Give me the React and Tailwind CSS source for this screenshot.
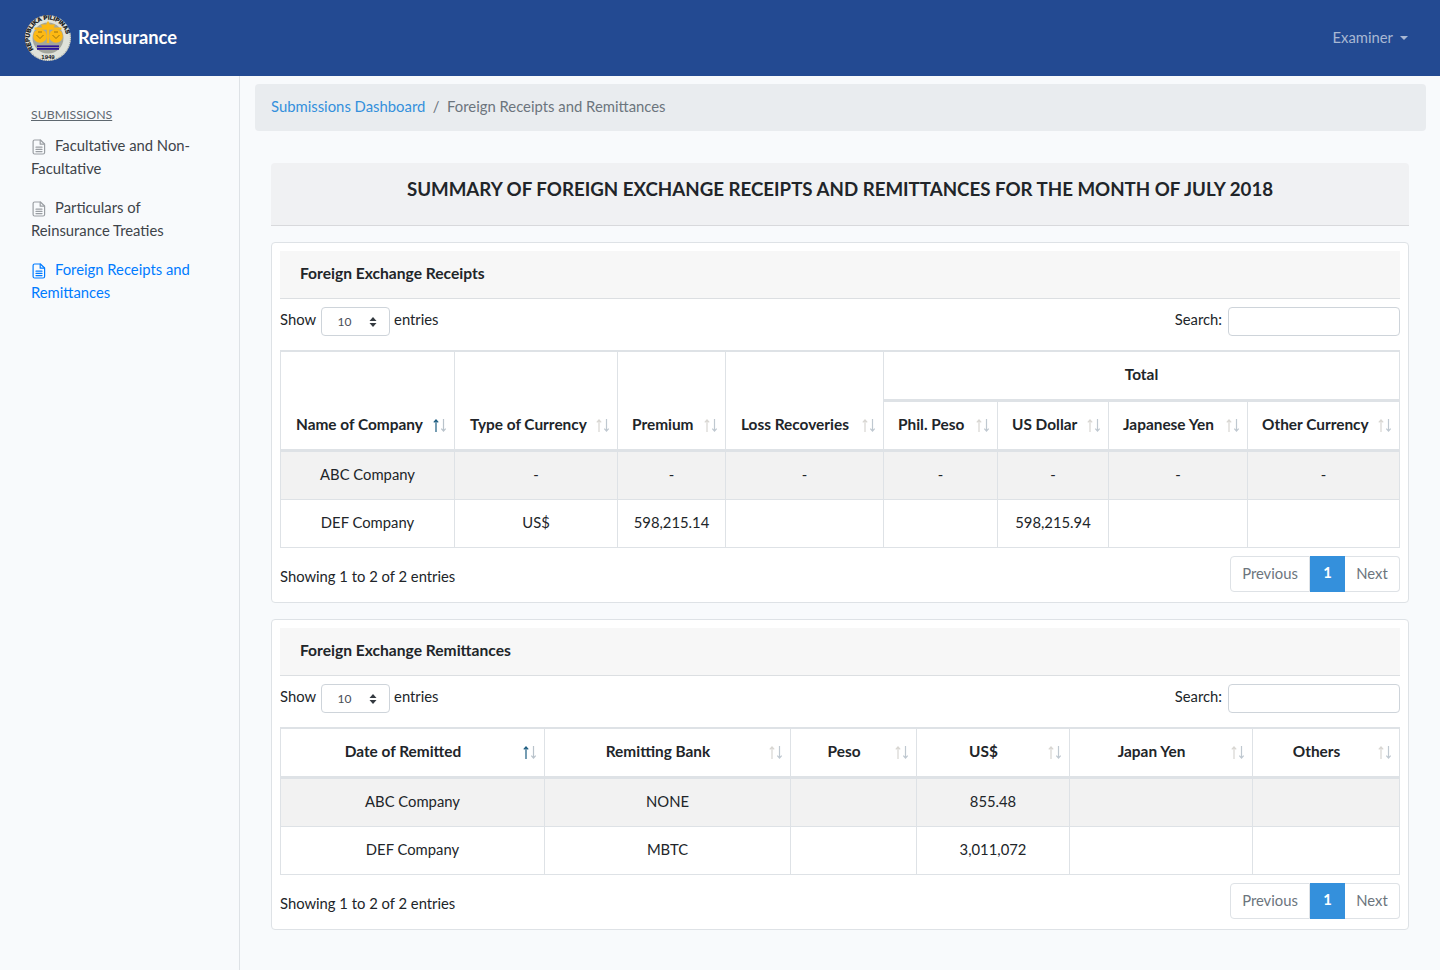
import React from "react";

const FONT = "font-['Lato','Noto_Sans',sans-serif]";

function Seal() {
  return (
    <svg width="48" height="48" viewBox="0 0 48 48" aria-label="Seal">
      <defs>
        <path id="sealRing" d="M9.500 35.300A18.400 18.400 0 1 1 38.500 35.300" />
      </defs>
      <circle cx="24" cy="24" r="23" fill="#dfe2da" />
      <circle cx="24" cy="24" r="22.400" fill="none" stroke="#3a3e42" strokeWidth="0.500" strokeDasharray="1 1" />
      <text fontSize="6" fontWeight="700" fill="#0f1216" stroke="#0f1216" strokeWidth="0.300" fontFamily="Liberation Sans, sans-serif">
        <textPath href="#sealRing" startOffset="0">REPUBLIKA PILIPINAS</textPath>
      </text>
      <text x="24" y="44.500" textAnchor="middle" fontSize="6" fontWeight="700" fill="#0f1216" fontFamily="Liberation Sans, sans-serif">1949</text>
      <circle cx="24" cy="24" r="15.500" fill="#a3a69c" />
      <path d="M17 10.500h14l-1.400 3.400H18.400z" fill="#fdb913" />
      <path d="M24 6.800l1.800 3.400 -1.800 2 -1.800-2z" fill="#fdb913" />
      <rect x="22.800" y="11" width="2.400" height="18" fill="#fdb913" />
      <path d="M10.500 13.500h27v2.200h-27z" fill="#fdb913" />
      <circle cx="16" cy="22" r="6.800" fill="#fdb913" />
      <circle cx="32" cy="22" r="6.800" fill="#fdb913" />
      <path d="M12.500 21l3.500 3.500 3.500-3.500M28.500 21l3.500 3.500 3.500-3.500M14 18h4M30 18h4" stroke="#8f6c0c" strokeWidth="0.900" fill="none" />
      <rect x="13" y="31.400" width="22" height="1.800" fill="#2c149c" />
      <rect x="13" y="34" width="22" height="1.800" fill="#2c149c" />
    </svg>
  );
}

function DocIcon({ className }) {
  return (
    <svg className={className} width="14" height="16" viewBox="0 0 14 16" fill="none" stroke="currentColor" strokeWidth="1.200" strokeLinejoin="round" strokeLinecap="round">
      <path d="M2.600 1h5.800L12.600 5v8.500a1.500 1.500 0 0 1-1.500 1.500H2.600a1.500 1.500 0 0 1-1.500-1.500v-11A1.500 1.500 0 0 1 2.600 1z" />
      <path d="M8.200 1.200V5.200h4.200" />
      <path d="M4 8.200h6M4 10.400h6M4 12.600h6" />
    </svg>
  );
}

function SideLink({ children, active, first }) {
  return (
    <li className={`${first ? "mt-[10px]" : "mt-[16px]"} text-[14.800px] leading-[23px] ${active ? "text-[#007bff]" : "text-[#3e444a]"}`}>
      <span className="inline-block w-[24px] align-[-4px] pl-[1px]">
        <DocIcon className={active ? "text-[#007bff]" : "text-[#9a9ea3]"} />
      </span>
      {children}
    </li>
  );
}

function Sort({ active }) {
  return (
    <svg
      className="absolute right-[7px] bottom-[17px]"
      width="14"
      height="13"
      viewBox="0 0 14 13"
      fill="none"
      strokeWidth="1.200"
    >
      <path d="M3 13V1M.8 3.400L3 1l2.200 2.400" stroke={active ? "#1c5c80" : "#d8d6d2"} />
      <path d="M10.500 0v12M8.300 9.600l2.200 2.400 2.200-2.400" stroke={active ? "#b9c3cb" : "#bfc8d0"} />
    </svg>
  );
}

function Th({ label, active, center, pl, h, ...rest }) {
  return (
    <th
      className={`relative ${h || "h-[49px]"} border border-[#dee2e6] border-b-[3px] align-bottom pb-[15px] text-[15.400px] leading-[20px] font-bold text-[#212529] whitespace-nowrap ${center ? "text-center pr-[30px] pl-[11px]" : "text-left"} ${pl || ""}`}
      {...rest}
    >
      {label}
      <Sort active={active} />
    </th>
  );
}

function Td({ children }) {
  return <td className="border border-[#dee2e6] text-center align-middle pb-[2px] text-[14.800px] text-[#212529]">{children}</td>;
}

function Controls() {
  return (
    <div className="flex justify-between items-start mt-[8px] h-[29px] text-[14.800px] text-[#212529]">
      <div className="flex items-center gap-[4.500px] leading-[26px] h-[29px]">
        <span className="-mt-[5px]">Show</span>
        <div className="w-[69px] h-[29px] bg-white border border-[#ced4da] rounded-[4px] flex items-center justify-between pl-[16px] pr-[12px] text-[12px] text-[#495057]">
          <span>10</span>
          <svg width="8" height="12" viewBox="0 0 8 12" fill="#343a40"><path d="M4 1l3.500 4h-7zM4 11L.5 7h7z" /></svg>
        </div>
        <span className="-mt-[5px]">entries</span>
      </div>
      <div className="flex items-center gap-[6px] h-[29px]">
        <span className="-mt-[5px]">Search:</span>
        <input aria-label="Search" className="w-[172px] h-[29px] bg-white border border-[#ced4da] rounded-[4px]" />
      </div>
    </div>
  );
}

function Footer() {
  return (
    <div className="flex justify-between items-start mt-[8px] text-[14.800px] text-[#212529]">
      <span className="mt-[9px] leading-[23px]">Showing 1 to 2 of 2 entries</span>
      <div className="flex h-[36px] leading-[32px] text-center">
        <span className="w-[80px] bg-white border border-[#dee2e6] rounded-l-[4px] text-[#6c757d]">Previous</span>
        <span className="w-[35px] bg-[#3490dc] text-white font-bold">1</span>
        <span className="w-[55px] bg-white border border-[#dee2e6] border-l-0 rounded-r-[4px] text-[#6c757d]">Next</span>
      </div>
    </div>
  );
}

function Card({ title, children, className }) {
  return (
    <section className={`bg-white border border-[#dee2e6] rounded-[4px] px-[8px] pt-[8px] ${className || ""}`}>
      <div className="h-[48px] bg-[#f7f7f7] border-b border-[#dcdfe2] pl-[20px] pb-[2px] flex items-center text-[15.600px] font-bold text-[#212529]">
        {title}
      </div>
      {children}
    </section>
  );
}

function ReceiptsTable() {
  const cols = [174, 163, 108, 158, 114, 111, 139, 152];
  return (
    <table className="mt-[14px] w-[1119px] table-fixed border-collapse border-t-[2px] border-[#dee2e6]">
      <colgroup>
        {cols.map((w, i) => <col key={i} style={{ width: w }} />)}
      </colgroup>
      <thead>
        <tr className="h-[49px]">
          <Th rowSpan={2} h="h-[99px]" label="Name of Company" active pl="pl-[15px]" />
          <Th rowSpan={2} h="h-[99px]" label="Type of Currency" pl="pl-[15px]" />
          <Th rowSpan={2} h="h-[99px]" label="Premium" pl="pl-[14px]" />
          <Th rowSpan={2} h="h-[99px]" label="Loss Recoveries" pl="pl-[15px]" />
          <th colSpan={4} className="border border-[#dee2e6] border-b-[3px] pb-[2px] text-center text-[15.400px] font-bold text-[#212529]">Total</th>
        </tr>
        <tr>
          <Th label="Phil. Peso" pl="pl-[14px]" h="h-[50px]" />
          <Th label="US Dollar" pl="pl-[14px]" h="h-[50px]" />
          <Th label="Japanese Yen" pl="pl-[14px]" h="h-[50px]" />
          <Th label="Other Currency" pl="pl-[14px]" h="h-[50px]" />
        </tr>
      </thead>
      <tbody>
        <tr className="h-[49px] bg-[#f2f2f2]">
          <Td>ABC Company</Td><Td>-</Td><Td>-</Td><Td>-</Td><Td>-</Td><Td>-</Td><Td>-</Td><Td>-</Td>
        </tr>
        <tr className="h-[48px] bg-white">
          <Td>DEF Company</Td><Td>US$</Td><Td>598,215.14</Td><Td></Td><Td></Td><Td>598,215.94</Td><Td></Td><Td></Td>
        </tr>
      </tbody>
    </table>
  );
}

function RemittancesTable() {
  const cols = [264, 246, 126, 153, 183, 147];
  return (
    <table className="mt-[14px] w-[1119px] table-fixed border-collapse border-t-[2px] border-[#dee2e6]">
      <colgroup>
        {cols.map((w, i) => <col key={i} style={{ width: w }} />)}
      </colgroup>
      <thead>
        <tr>
          <Th label="Date of Remitted" active center />
          <Th label="Remitting Bank" center />
          <Th label="Peso" center />
          <Th label="US$" center />
          <Th label="Japan Yen" center />
          <Th label="Others" center />
        </tr>
      </thead>
      <tbody>
        <tr className="h-[49px] bg-[#f2f2f2]">
          <Td>ABC Company</Td><Td>NONE</Td><Td></Td><Td>855.48</Td><Td></Td><Td></Td>
        </tr>
        <tr className="h-[48px] bg-white">
          <Td>DEF Company</Td><Td>MBTC</Td><Td></Td><Td>3,011,072</Td><Td></Td><Td></Td>
        </tr>
      </tbody>
    </table>
  );
}

export default function App() {
  return (
    <div className={`${FONT} min-h-screen bg-[#f8fafc] flex flex-col`}>
      <header className="h-[76px] bg-[#234a92] flex items-center justify-between pl-[24px] pr-[32px]">
        <div className="flex items-center gap-[6px]">
          <Seal />
          <span className="text-white text-[18.300px] font-bold pb-[1px]">Reinsurance</span>
        </div>
        <div className="flex items-center gap-[7px] text-[14.800px] text-[#a9b8d3]">
          <span className="pb-[1px]">Examiner</span>
          <span className="w-0 h-0 border-x-[4px] border-x-transparent border-t-[4px] border-t-[#a9b8d3]"></span>
        </div>
      </header>
      <div className="flex flex-1">
        <aside className="w-[240px] shrink-0 border-r border-[#dee2e6] pl-[31px] pr-[30px] pt-[30px]">
          <div className="text-[12.300px] leading-[18px] text-[#5f6870] underline">SUBMISSIONS</div>
          <ul>
            <SideLink first>Facultative and Non-Facultative</SideLink>
            <SideLink>Particulars of Reinsurance Treaties</SideLink>
            <SideLink active>Foreign Receipts and Remittances</SideLink>
          </ul>
        </aside>
        <main className="flex-1 pl-[15px] pr-[15px] pt-[8px]">
          <nav className="h-[47px] bg-[#e9ecef] rounded-[4px] pl-[16px] pb-[2px] flex items-center text-[14.850px] text-[#6c757d]">
            <span className="text-[#3490dc]">Submissions Dashboard</span>
            <span className="px-[7.500px]">/</span>
            <span>Foreign Receipts and Remittances</span>
          </nav>
          <div className="ml-[16px] mr-[17px] mt-[32px]">
            <div className="h-[63px] bg-[#f0f1f3] rounded-t-[4px] border-b border-[#d8d9dc] pb-[10px] flex items-center justify-center text-[18.700px] font-bold text-[#212529]">
              SUMMARY OF FOREIGN EXCHANGE RECEIPTS AND REMITTANCES FOR THE MONTH OF JULY 2018
            </div>
            <Card title="Foreign Exchange Receipts" className="mt-[16px] h-[361px]">
              <Controls />
              <ReceiptsTable />
              <Footer />
            </Card>
            <Card title="Foreign Exchange Remittances" className="mt-[16px] h-[311px]">
              <Controls />
              <RemittancesTable />
              <Footer />
            </Card>
          </div>
        </main>
      </div>
    </div>
  );
}
